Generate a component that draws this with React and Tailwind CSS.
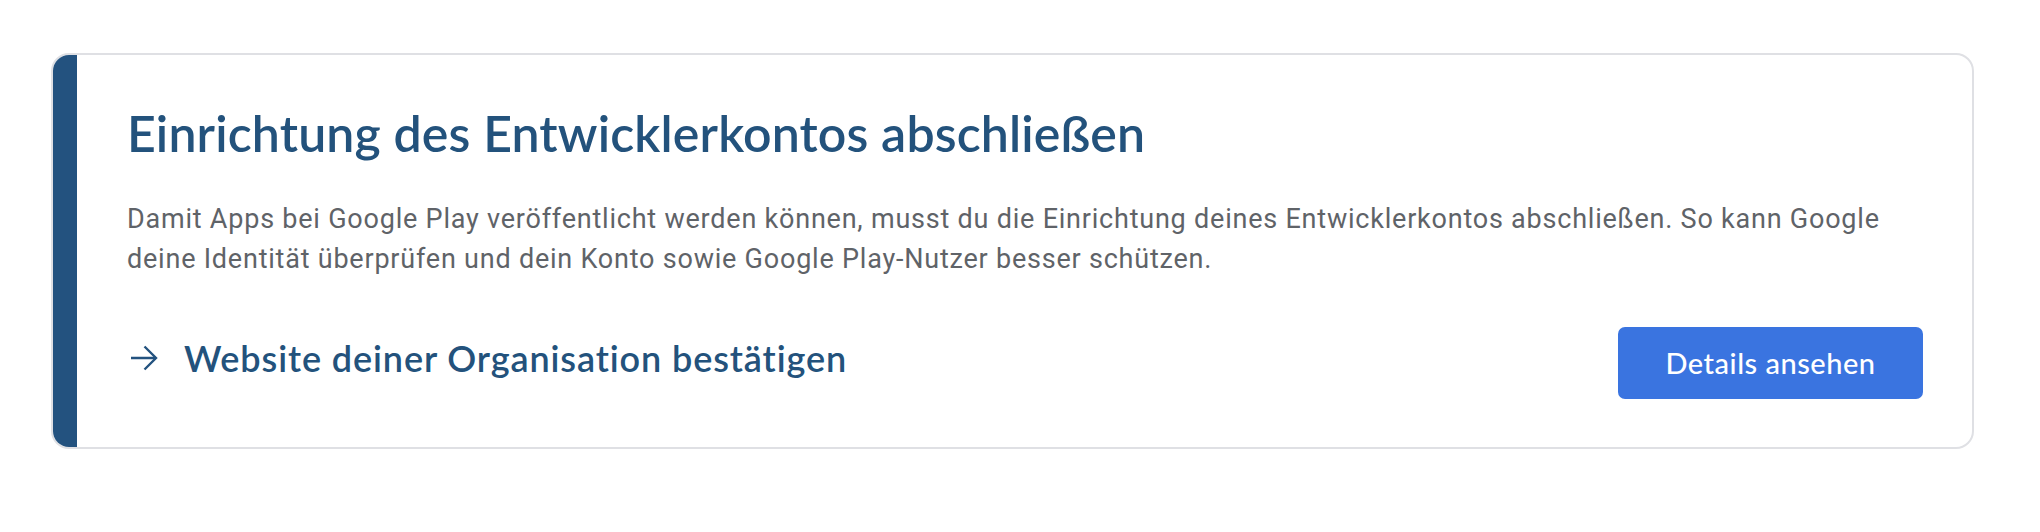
const ArrowIcon = () => (
  <svg width="28" height="26" viewBox="0 0 28 26" fill="none" className="shrink-0">
    <path d="M1 13H26" stroke="#23527f" strokeWidth="2.4" />
    <path d="M14.5 1.5L26 13L14.5 24.5" stroke="#23527f" strokeWidth="2.4" />
  </svg>
);

const App = () => {
  return (
    <div className="min-h-[532px] bg-white pl-[51px] pt-[53px]">
      <div className="flex w-[1923px] overflow-hidden rounded-[18px] border-2 border-[#dfe0e4] bg-white">
        {/* status bar links */}
        <div className="w-[24px] shrink-0 bg-[#23527f]"></div>

        <div className="flex-1 pl-[50px] pr-[49px] pt-[49px] pb-[48px]">
          <h1 className="font-['Lato',sans-serif] text-[50px] font-semibold leading-[58px] tracking-[0.15px] text-[#23527c]">
            Einrichtung des Entwicklerkontos abschließen
          </h1>

          <p className="mt-[37px] font-['Roboto',sans-serif] text-[27px] leading-[40px] tracking-[0.78px] text-[#5f6368]">
            Damit Apps bei Google Play veröffentlicht werden können, musst du die Einrichtung deines Entwicklerkontos
            abschließen. So kann Google deine Identität überprüfen und dein Konto sowie Google Play-Nutzer besser
            schützen.
          </p>

          <div className="mt-[48px] flex items-center justify-between">
            <a href="#" className="mb-[10px] flex items-center gap-[26px] pl-[3px] no-underline">
              <ArrowIcon />
              <span className="font-['Lato',sans-serif] text-[36px] font-semibold tracking-[0.9px] text-[#23527c]">
                Website deiner Organisation bestätigen
              </span>
            </a>

            <button
              type="button"
              className="h-[72px] w-[305px] rounded-[7px] bg-[#3a74e0] font-['Lato',sans-serif] text-[29px] font-medium tracking-[0.5px] text-white"
            >
              Details ansehen
            </button>
          </div>
        </div>
      </div>
    </div>
  );
};

export default App;
